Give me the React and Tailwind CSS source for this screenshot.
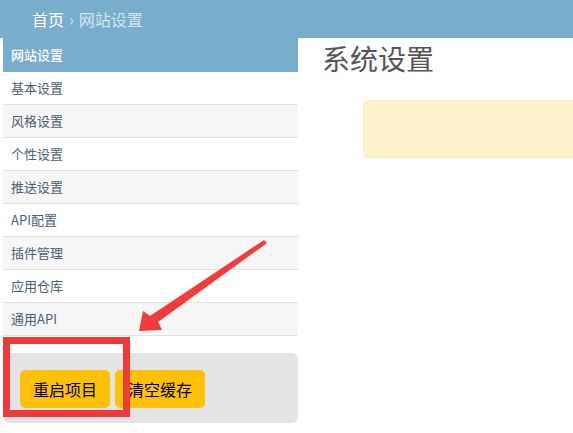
import cx from "clsx"

const MENU = ["基本设置", "风格设置", "个性设置", "推送设置", "API配置", "插件管理", "应用仓库", "通用API"]

const Arrow = () => (
  <svg className="absolute left-0 top-0 pointer-events-none" width="573" height="433" viewBox="0 0 573 433">
    {/* tapered shaft + head, pointing down-left at the restart button */}
    <polygon points="264,240 267,243 158,322 162,330 139,331 143,311 150,316" fill="#f23b3b" />
  </svg>
)

const App = () => {
  return (
    <div
      className="relative w-[573px] h-[433px] overflow-hidden bg-white"
      style={{ fontFamily: '"Noto Sans CJK SC", "Liberation Sans", sans-serif' }}
    >
      <div className="h-[38px] bg-[#78aecb] flex items-center pl-8 text-[16px] leading-none">
        <span className="text-white">首页</span>
        <span className="text-[#d3e6f0] mx-[5px]">›</span>
        <span className="text-[#d3e6f0]">网站设置</span>
      </div>
      <div className="flex">
        <div className="w-[295px] ml-[3px] shrink-0">
          <div className="h-[34px] bg-[#78aecb] flex items-center pl-2 text-[13px] text-white font-medium">网站设置</div>
          {MENU.map((item, i) => (
            <div
              key={item}
              className={cx(
                "h-[33px] flex items-center pl-2 text-[13px] text-[#4d6072] border-b border-[#e2e2e2]",
                i % 2 === 1 ? "bg-[#f6f6f7]" : "bg-white"
              )}
            >
              {item}
            </div>
          ))}
          <div className="mt-[17px] h-[70px] rounded-md bg-[#e4e4e6] flex items-start gap-[5px] pl-[17px] pt-[17px]">
            <button className="w-[90px] h-[38px] rounded-[5px] bg-[#ffc107] text-[16px] text-black">重启项目</button>
            <button className="w-[90px] h-[38px] rounded-[5px] bg-[#ffc107] text-[16px] text-black">清空缓存</button>
          </div>
        </div>
        <div className="flex-1 pl-6">
          <h1 className="text-[28px] leading-none text-[#555] mt-[6px]">系统设置</h1>
          <div className="mt-[28px] ml-[41px] h-[58px] rounded-l-md bg-[#fff1cc] border border-[#fde9b8] border-r-0"></div>
        </div>
      </div>
      <div className="absolute left-[3px] top-[337px] w-[127px] h-[80px] border-[7px] border-[#f03a3a]"></div>
      <Arrow />
    </div>
  )
}

export default App
